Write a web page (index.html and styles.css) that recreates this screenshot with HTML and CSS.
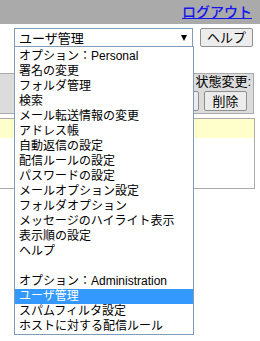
FILE: index.html
```html
<!DOCTYPE html>
<html lang="ja">
<head>
    <meta charset="UTF-8">
    <title>ユーザ管理</title>
    <link rel="stylesheet" href="styles.css">
</head>
<body>
    <div class="page">
        <div class="topbar">
            <a href="#" class="logout">ログアウト</a>
        </div>

        <div class="toolbar">
            <div class="select-box">
                <span class="select-value">ユーザ管理</span>
                <span class="select-arrow"></span>
            </div>
            <button class="btn help-btn">ヘルプ</button>
        </div>

        <div class="panel">
            <div class="panel-label">状態変更:</div>
            <div class="panel-buttons">
                <button class="btn">移動</button>
                <button class="btn">削除</button>
            </div>
        </div>

        <div class="list-box">
            <div class="list-header"></div>
        </div>

        <ul class="dropdown">
            <li class="group">オプション：Personal</li>
            <li>署名の変更</li>
            <li>フォルダ管理</li>
            <li>検索</li>
            <li>メール転送情報の変更</li>
            <li>アドレス帳</li>
            <li>自動返信の設定</li>
            <li>配信ルールの設定</li>
            <li>パスワードの設定</li>
            <li>メールオプション設定</li>
            <li>フォルダオプション</li>
            <li>メッセージのハイライト表示</li>
            <li>表示順の設定</li>
            <li>ヘルプ</li>
            <li class="blank"></li>
            <li class="group">オプション：Administration</li>
            <li class="selected">ユーザ管理</li>
            <li>スパムフィルタ設定</li>
            <li>ホストに対する配信ルール</li>
        </ul>
    </div>
</body>
</html>
```

FILE: styles.css
```css
* {
    margin: 0;
    padding: 0;
    box-sizing: border-box;
}

body {
    background: white;
    font-family: "Liberation Sans", "Noto Sans CJK JP", sans-serif;
    font-size: 13px;
    color: #000;
}

.page {
    position: relative;
    width: 260px;
    height: 341px;
    overflow: hidden;
}

.topbar {
    height: 24px;
    background: #aaaaaa;
    text-align: right;
    padding-right: 8px;
    line-height: 24px;
}

.logout {
    color: #1515ee;
    font-size: 14px;
    font-weight: 500;
    text-decoration: underline;
}

.toolbar {
    display: flex;
    align-items: center;
    gap: 7px;
    margin-top: 4px;
    padding-left: 14px;
    height: 19px;
}

.select-box {
    width: 179px;
    height: 19px;
    border: 1px solid #7f9db9;
    display: flex;
    align-items: center;
    justify-content: space-between;
    padding: 0 4px 0 4px;
    font-size: 13px;
}

.select-arrow {
    width: 0;
    height: 0;
    border-left: 3.5px solid transparent;
    border-right: 3.5px solid transparent;
    border-top: 6px solid #000;
    margin-right: 1px;
}

.btn {
    font-family: "Liberation Sans", "Noto Sans CJK JP", sans-serif;
    font-size: 13px;
    background: #ececec;
    border: 1px solid #8f8f8f;
    border-radius: 2px;
    color: #000;
    height: 19px;
    padding: 0;
    line-height: 17px;
    white-space: nowrap;
}

.help-btn {
    width: 53px;
}

.panel {
    margin-top: 26px;
    width: 254px;
    height: 41px;
    background: #dcdcdc;
    border-top: 1px solid #aaaaaa;
    border-bottom: 1px solid #aaaaaa;
    border-right: 1px solid #aaaaaa;
    display: flex;
    flex-direction: column;
    align-items: flex-end;
    padding-right: 2px;
}

.panel-label {
    line-height: 15px;
}

.panel-buttons {
    display: flex;
    gap: 5px;
    margin-top: 2px;
    padding-right: 4px;
}

.panel-buttons .btn {
    height: 20px;
    width: 43px;
}

.list-box {
    margin-top: 4px;
    width: 255px;
    height: 71px;
    border: 1px solid #aaaaaa;
    border-left: none;
}

.list-header {
    height: 19px;
    background: #ffffcc;
}

.dropdown {
    position: absolute;
    left: 14px;
    top: 46px;
    width: 180px;
    height: 289px;
    list-style: none;
    background: white;
    border: 1px solid #7f9db9;
    padding-top: 2px;
    font-size: 12px;
}

.dropdown li {
    height: 15px;
    line-height: 15px;
    padding-left: 4px;
    white-space: nowrap;
}

.dropdown li.selected {
    background: #3399ff;
    color: white;
}
```
